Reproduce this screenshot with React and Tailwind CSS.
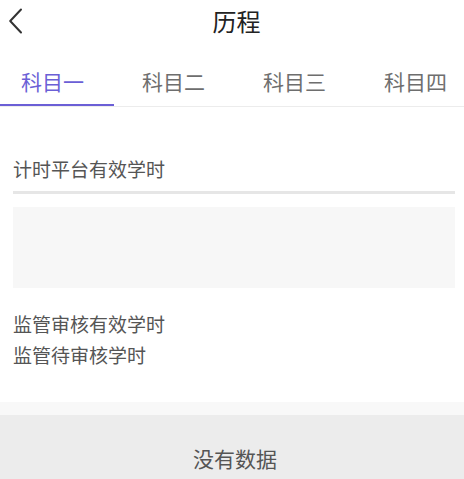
import React from "react";

const font = { fontFamily: '"Noto Sans CJK SC", "Noto Sans", sans-serif' };

export default function App() {
  const tabs = ["科目一", "科目二", "科目三", "科目四"];
  return (
    <div className="w-[464px] h-[479px] overflow-hidden bg-white flex flex-col" style={font}>
      {/* header */}
      <div className="h-[42px] flex items-center relative shrink-0">
        <div className="w-[30px] pl-[8px] flex items-center">
          <svg width="15" height="26" viewBox="0 0 15 26" fill="none">
            <path d="M13 1.5 L2.2 13 L13 24.5" stroke="#333" strokeWidth="2" strokeLinecap="round" strokeLinejoin="round" />
          </svg>
        </div>
        <div className="flex-1 flex justify-center pr-[24px]">
          <span className="text-[24px] leading-[24px] text-[#222] pl-[3px]">历程</span>
        </div>
      </div>

      {/* tabs */}
      <div className="h-[62px] flex -ml-[8px] shrink-0">
        {tabs.map((t, i) => (
          <div key={t} className="w-[121px] shrink-0 flex justify-center pt-[29px]">
            <span className={`text-[21px] leading-[21px] ${i === 0 ? "text-[#6b5fd6]" : "text-[#6e6e6e]"}`}>{t}</span>
          </div>
        ))}
      </div>
      <div className="h-[2px] w-[114px] bg-[#6b5fd6] shrink-0" />
      <div className="h-[1px] w-full bg-[#ececec] shrink-0" />

      {/* content */}
      <div className="pl-[13px] pr-[9px] flex flex-col shrink-0">
        <div className="mt-[52px] text-[19px] leading-[19px] text-[#555]">计时平台有效学时</div>
        <div className="mt-[13px] h-[3px] bg-[#e6e6e6]" />
        <div className="mt-[13px] h-[81px] bg-[#f7f7f7]" />
        <div className="mt-[26px] text-[19px] leading-[19px] text-[#555]">监管审核有效学时</div>
        <div className="mt-[12px] text-[19px] leading-[19px] text-[#555]">监管待审核学时</div>
      </div>

      <div className="mt-[38px] h-[13px] bg-[#f8f8f8] shrink-0" />
      <div className="flex-1 bg-[#ececec] flex justify-center">
        <span className="mt-[33px] text-[21px] leading-[21px] text-[#555] pl-[6px]">没有数据</span>
      </div>
    </div>
  );
}
